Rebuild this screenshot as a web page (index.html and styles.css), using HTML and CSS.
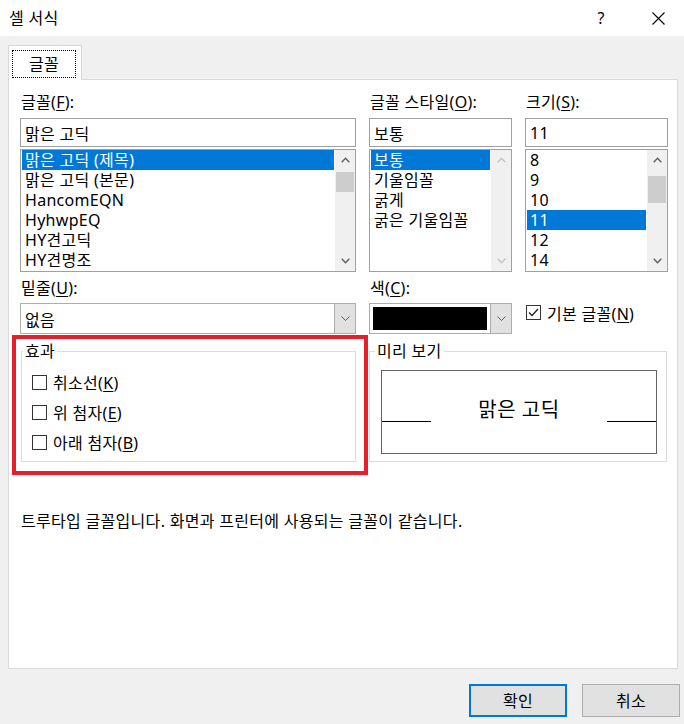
FILE: index.html
```html
<!DOCTYPE html>
<html lang="ko">
<head>
<meta charset="utf-8">
<title>셀 서식</title>
<link rel="stylesheet" href="styles.css">
</head>
<body>
<div class="titlebar">
  <span class="title">셀 서식</span>
  <span class="help">?</span>
  <span class="close"><svg width="13" height="13" viewBox="0 0 13 13"><path d="M0.5 0.5 L12.5 12.5 M12.5 0.5 L0.5 12.5" stroke="#000" stroke-width="1.1" fill="none"/></svg></span>
</div>
<div class="main">
  <div class="tab"><span class="tab-focus">글꼴</span></div>
  <div class="panel">
    <div class="grid3">
      <div class="col">
        <div class="label">글꼴(<u>F</u>):</div>
        <div class="textbox">맑은 고딕</div>
        <div class="list">
          <div class="items">
            <div class="item sel">맑은 고딕 (제목)</div>
            <div class="item">맑은 고딕 (본문)</div>
            <div class="item">HancomEQN</div>
            <div class="item">HyhwpEQ</div>
            <div class="item">HY견고딕</div>
            <div class="item">HY견명조</div>
          </div>
          <div class="sb">
            <div class="sb-btn"><svg width="9" height="6" viewBox="0 0 9 6"><polyline points="0.7,5.2 4.5,1.2 8.3,5.2" fill="none" stroke="#606060" stroke-width="1.4"/></svg></div>
            <div class="sb-track"><div class="thumb thumb-font"></div></div>
            <div class="sb-btn"><svg width="9" height="6" viewBox="0 0 9 6"><polyline points="0.7,0.8 4.5,4.8 8.3,0.8" fill="none" stroke="#606060" stroke-width="1.4"/></svg></div>
          </div>
        </div>
      </div>
      <div class="col">
        <div class="label">글꼴 스타일(<u>O</u>):</div>
        <div class="textbox">보통</div>
        <div class="list">
          <div class="items">
            <div class="item sel">보통</div>
            <div class="item">기울임꼴</div>
            <div class="item">굵게</div>
            <div class="item">굵은 기울임꼴</div>
          </div>
          <div class="sb">
            <div class="sb-btn"><svg width="9" height="6" viewBox="0 0 9 6"><polyline points="0.7,5.2 4.5,1.2 8.3,5.2" fill="none" stroke="#c4c4c4" stroke-width="1.4"/></svg></div>
            <div class="sb-track"></div>
            <div class="sb-btn"><svg width="9" height="6" viewBox="0 0 9 6"><polyline points="0.7,0.8 4.5,4.8 8.3,0.8" fill="none" stroke="#c4c4c4" stroke-width="1.4"/></svg></div>
          </div>
        </div>
      </div>
      <div class="col">
        <div class="label">크기(<u>S</u>):</div>
        <div class="textbox">11</div>
        <div class="list">
          <div class="items">
            <div class="item">8</div>
            <div class="item">9</div>
            <div class="item">10</div>
            <div class="item sel">11</div>
            <div class="item">12</div>
            <div class="item">14</div>
          </div>
          <div class="sb">
            <div class="sb-btn"><svg width="9" height="6" viewBox="0 0 9 6"><polyline points="0.7,5.2 4.5,1.2 8.3,5.2" fill="none" stroke="#606060" stroke-width="1.4"/></svg></div>
            <div class="sb-track"><div class="thumb thumb-size"></div></div>
            <div class="sb-btn"><svg width="9" height="6" viewBox="0 0 9 6"><polyline points="0.7,0.8 4.5,4.8 8.3,0.8" fill="none" stroke="#606060" stroke-width="1.4"/></svg></div>
          </div>
        </div>
      </div>
    </div>

    <div class="grid3 mid">
      <div class="col">
        <div class="label">밑줄(<u>U</u>):</div>
        <div class="combo">
          <div class="combo-text">없음</div>
          <div class="combo-btn"><svg width="9" height="5" viewBox="0 0 9 5"><polyline points="0.5,0.5 4.5,4.5 8.5,0.5" fill="none" stroke="#606060" stroke-width="1"/></svg></div>
        </div>
      </div>
      <div class="col">
        <div class="label">색(<u>C</u>):</div>
        <div class="combo">
          <div class="swatch-cell"><div class="swatch"></div></div>
          <div class="combo-btn"><svg width="9" height="5" viewBox="0 0 9 5"><polyline points="0.5,0.5 4.5,4.5 8.5,0.5" fill="none" stroke="#606060" stroke-width="1"/></svg></div>
        </div>
      </div>
      <div class="col">
        <div class="check-row normal-font">
          <span class="box"><svg width="11" height="9" viewBox="0 0 11 9"><polyline points="1,4.5 4,7.5 10,1" fill="none" stroke="#222" stroke-width="1.3"/></svg></span>
          <span>기본 글꼴(<u>N</u>)</span>
        </div>
      </div>
    </div>

    <div class="groups">
      <fieldset class="group effects-group">
        <legend>효과</legend>
        <div class="effects">
          <div class="check-row"><span class="box"></span><span>취소선(<u>K</u>)</span></div>
          <div class="check-row"><span class="box"></span><span>위 첨자(<u>E</u>)</span></div>
          <div class="check-row"><span class="box"></span><span>아래 첨자(<u>B</u>)</span></div>
        </div>
      </fieldset>
      <fieldset class="group preview-group">
        <legend>미리 보기</legend>
        <div class="preview-wrap">
          <div class="preview">
            <div class="base-line"></div>
            <div class="preview-text">맑은 고딕</div>
            <div class="base-line"></div>
          </div>
        </div>
      </fieldset>
    </div>

    <div class="info">트루타입 글꼴입니다. 화면과 프린터에 사용되는 글꼴이 같습니다.</div>

    <div class="annot"></div>
  </div>
</div>
<div class="footer">
  <div class="btn default">확인</div>
  <div class="btn">취소</div>
</div>
</body>
</html>
```

FILE: styles.css
```css
* { box-sizing: border-box; }
html, body { margin: 0; padding: 0; }
body {
  width: 684px;
  height: 724px;
  overflow: hidden;
  background: #f0f0f0;
  font-family: "Noto Sans", "Noto Sans CJK KR", sans-serif;
  font-size: 16px;
  letter-spacing: 0.3px;
  color: #000;
}
u { text-underline-offset: 2px; text-decoration-thickness: 1px; }

.titlebar {
  height: 36px;
  background: #fff;
  display: flex;
  align-items: center;
  padding-left: 9px;
}
.title { flex: 1; line-height: 20px; font-size: 16px; }
.help { width: 20px; text-align: center; font-size: 16px; line-height: 20px; margin-right: 37px; }
.close { width: 20px; height: 20px; display: flex; align-items: center; justify-content: center; margin-right: 16px; }

.main { padding: 9px 6px 0 8px; }

.tab {
  width: 74px;
  height: 35px;
  background: #fff;
  border: 1px solid #d9d9d9;
  border-bottom: none;
  padding: 4px 5px 2px 3px;
  position: relative;
  z-index: 1;
  margin-bottom: -1px;
}
.tab-focus {
  display: flex;
  align-items: center;
  justify-content: center;
  height: 100%;
  border: 1px dotted #000;
  line-height: 20px;
}

.panel {
  width: 670px;
  height: 590px;
  background: #fff;
  border: 1px solid #d9d9d9;
  padding: 12px 9px 0 11px;
  position: relative;
}

.grid3 {
  display: grid;
  grid-template-columns: 336px 143px 143px;
  column-gap: 13px;
}
.label { height: 20px; line-height: 20px; padding-left: 1px; white-space: nowrap; }

.textbox {
  margin-top: 6px;
  height: 29px;
  border: 1px solid #a0a0a0;
  padding-left: 4px;
  display: flex;
  align-items: center;
  white-space: nowrap;
}
.list {
  margin-top: 2px;
  height: 123px;
  border: 1px solid #a0a0a0;
  display: flex;
}
.items { flex: 1; padding: 0 1px; overflow: hidden; }
.item { height: 20px; line-height: 20px; padding-left: 3px; white-space: nowrap; }
.item.sel { background: #0078d7; color: #fff; }

.sb { width: 20px; background: #f0f0f0; display: flex; flex-direction: column; }
.sb-btn { height: 20px; display: flex; align-items: center; justify-content: center; }
.sb-track { flex: 1; }
.thumb { background: #cdcdcd; margin: 0 1px; }
.thumb-font { margin-top: 2px; height: 20px; }
.thumb-size { margin-top: 6px; height: 27px; }

.mid .label { margin-top: 6px; }
.combo {
  margin-top: 5px;
  height: 31px;
  border: 1px solid #adadad;
  background: #fff;
  display: flex;
}
.combo-text { flex: 1; padding-left: 4px; display: flex; align-items: center; }
.combo-btn {
  width: 21px;
  background: #e1e1e1;
  border-left: 1px solid #adadad;
  display: flex;
  align-items: center;
  justify-content: center;
}
.swatch-cell { flex: 1; padding: 3px; }
.swatch { width: 100%; height: 100%; background: #000; }

.check-row { display: flex; align-items: center; gap: 6px; height: 30px; white-space: nowrap; }
.box {
  width: 15px;
  height: 15px;
  border: 1px solid #333;
  background: #fff;
  display: flex;
  align-items: center;
  justify-content: center;
  flex: none;
}
.normal-font { margin-top: 25px; height: 31px; padding-left: 1px; }

.groups {
  margin-top: 7px;
  display: grid;
  grid-template-columns: 336px 299px;
  column-gap: 13px;
}
.group {
  margin: 0;
  padding: 0;
  min-width: 0;
  border: 1px solid #dcdcdc;
}
.group legend { padding: 0 2px; line-height: 20px; }
.effects-group { margin-left: 1px; }
.effects-group legend { margin-left: 1px; }
.preview-group { margin-right: 1px; }
.preview-group legend { margin-left: 5px; }

.effects { padding: 6px 0 4px 10px; }
.preview-wrap { padding: 9px 0 7px 11px; }
.preview {
  width: 276px;
  height: 84px;
  border: 1px solid #646464;
  display: grid;
  grid-template-columns: 49px 1fr 49px;
  align-items: start;
}
.base-line { margin-top: 50px; height: 1px; background: #000; }
.preview-text { margin-top: 26px; font-size: 20px; line-height: 26px; text-align: center; white-space: nowrap; letter-spacing: 0.5px; }

.info { margin-top: 49px; line-height: 20px; padding-left: 1px; white-space: nowrap; }

.annot {
  position: absolute;
  left: 3px;
  top: 255px;
  width: 356px;
  height: 140px;
  border: 4px solid #e6202a;
  pointer-events: none;
}

.footer {
  display: flex;
  justify-content: flex-end;
  gap: 15px;
  padding: 15px 4px 0 0;
}
.btn {
  width: 98px;
  height: 33px;
  background: #e1e1e1;
  border: 1px solid #adadad;
  display: flex;
  align-items: center;
  justify-content: center;
  line-height: 20px;
}
.btn.default { border: 2px solid #0078d7; }
```
